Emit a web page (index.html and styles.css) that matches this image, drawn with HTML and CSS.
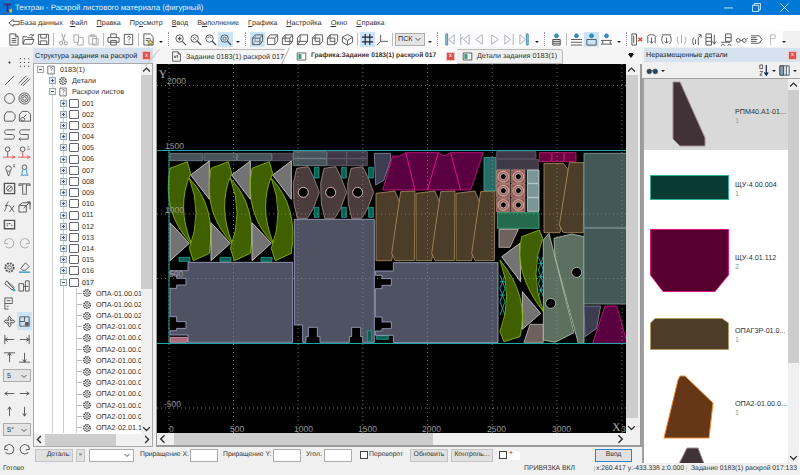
FILE: index.html
```html
<!DOCTYPE html>
<html lang="ru">
<head>
<meta charset="utf-8">
<title>Техтран</title>
<link rel="stylesheet" href="styles.css">
</head>
<body>
<svg class="defs" aria-hidden="true">
  <symbol id="doc" viewBox="0 0 14 14"><path d="M3 1h6l3 3v9H3zM9 1v3h3M5 6h5M5 8h5M5 10h5"/></symbol>
  <symbol id="open" viewBox="0 0 14 14"><path d="M1 12V4h4l1 1h5v2M1 12l2-5h10l-2 5zM8 3c1-2 3-2 4 0M12 1v2h-2"/></symbol>
  <symbol id="save" viewBox="0 0 14 14"><path d="M1.500 1.500h11v11h-11zM4 1.500v4h6v-4M3.500 12.500v-4h7v4"/></symbol>
  <symbol id="cut" viewBox="0 0 14 14"><path d="M5 1l3 8M9 1L6 9" stroke="#999"/><circle cx="4.500" cy="11" r="1.800" stroke="#999"/><circle cx="9.500" cy="11" r="1.800" stroke="#999"/></symbol>
  <symbol id="copy" viewBox="0 0 14 14"><path d="M2 2h5v8H2zM7 5h5v8H6v-3" stroke="#aaa"/></symbol>
  <symbol id="paste" viewBox="0 0 14 14"><path d="M2 3h8v9H2zM4 2h4v2H4zM6 6h6v7H6z" stroke="#aaa"/></symbol>
  <symbol id="print" viewBox="0 0 14 14"><path d="M4 5V1h6v4M1 5h12v5H1zM4 8h6v5H4z"/></symbol>
  <symbol id="hdoc" viewBox="0 0 14 14"><path d="M2.500 1.500h9v11h-9zM6 5c0-2 3-2 3 0 0 1-1.500 1-1.500 3M7.500 9.500v1"/></symbol>
  <symbol id="dstar" viewBox="0 0 14 14"><path d="M2 1h7l3 3v9H2zM4 6h5M4 8h3"/><path d="M9 7l1 2 2 .5-1.500 1.500.5 2-2-1-2 1 .5-2L6 9.500 8 9z" fill="#f4d35e" stroke="#775"/></symbol>
  <symbol id="zp" viewBox="0 0 14 14"><circle cx="6" cy="6" r="4"/><path d="M9 9l4 4M4 6h4M6 4v4" stroke-width="1.300"/></symbol>
  <symbol id="zs" viewBox="0 0 14 14"><circle cx="6" cy="6" r="4"/><path d="M9 9l4 4" stroke-width="1.500"/><path d="M4 4l4 4M8 4L4 8" stroke="#777"/></symbol>
  <symbol id="zr" viewBox="0 0 14 14"><circle cx="6" cy="6" r="4"/><path d="M9 9l4 4" stroke-width="1.500"/><path d="M4 6a2 2 0 0 1 4 0" stroke="#777"/></symbol>
  <symbol id="zf" viewBox="0 0 14 14"><circle cx="6" cy="6" r="4"/><path d="M9 9l4 4" stroke-width="1.500"/><path d="M4.500 4.500h3v3h-3z" stroke="#777"/></symbol>
  <symbol id="c1" viewBox="0 0 14 14"><path d="M1.500 5.500h8v7h-8zM1.500 5.500l3-3.500h8v7l-3 3.500M9.500 5.500l3-3.500"/><path d="M1.500 12.500l3-3.500h8M4.500 2v7" stroke="#888"/></symbol>
  <symbol id="c2" viewBox="0 0 14 14"><path d="M1.500 5.500h8v7h-8zM1.500 5.500l3-3.500h8v7l-3 3.500M9.500 5.500l3-3.500" fill="#fff"/></symbol>
  <symbol id="c3" viewBox="0 0 14 14"><path d="M4.500 2h8v7h-8zM1.500 5.500l3-3.500M1.500 5.500h8l3-3.500M1.500 5.500v7h8v-7M9.500 12.500l3-3.500"/></symbol>
  <symbol id="c4" viewBox="0 0 14 14"><path d="M1.500 5.500v7h8l3-3.500V2h-8zM4.500 2v7h8M1.500 12.500l3-3.500M4.500 9h-3"/></symbol>
  <symbol id="c5" viewBox="0 0 14 14"><path d="M1.500 5.500h8v7M1.500 5.500v7h8M1.500 5.500l3-3.500h8v7l-3 3.500M4.500 2v7h5"/></symbol>
  <symbol id="c6" viewBox="0 0 14 14"><path d="M7 1.500l5.500 3v5.500L7 13l-5.500-3V4.500zM1.500 4.500L7 8l5.500-3.500M7 8v5"/></symbol>
  <symbol id="grid" viewBox="0 0 14 14"><path d="M4.500 1v12M9.500 1v12M1 4.500h12M1 9.500h12" stroke="#223" stroke-width="1.200"/></symbol>
  <symbol id="axes" viewBox="0 0 14 14"><path d="M5 2v7h8M5 9l-4 4"/></symbol>
  <symbol id="n1" viewBox="0 0 14 14"><path d="M3 1h2v12H3z" fill="#9cd" stroke="#48a"/><path d="M12 2L6 7l6 5z" stroke="#aab"/></symbol>
  <symbol id="n2" viewBox="0 0 14 14"><path d="M3 1v12M6 7l6-5v10zM3 7l3-3" stroke="#aab"/></symbol>
  <symbol id="n3" viewBox="0 0 14 14"><path d="M10 2L3 7l7 5z" stroke="#aab"/></symbol>
  <symbol id="n4" viewBox="0 0 14 14"><path d="M4 2l7 5-7 5z" stroke="#aab"/></symbol>
  <symbol id="n5" viewBox="0 0 14 14"><path d="M11 1v12M2 2l6 5-6 5z" stroke="#aab"/></symbol>
  <symbol id="n6" viewBox="0 0 14 14"><path d="M9 1h2v12H9z" fill="#9cd" stroke="#48a"/><path d="M2 2l6 5-6 5z" stroke="#aab"/></symbol>
  <symbol id="p1" viewBox="0 0 14 14"><path d="M3 7h8v6H3zM3 9h8M3 11h8" stroke="#444"/><circle cx="7" cy="3" r="2" fill="#39c" stroke="#17a"/></symbol>
  <symbol id="p2" viewBox="0 0 14 14"><path d="M1 7h12M1 10h12M1 13h12"/><circle cx="7" cy="3" r="2" fill="#39c" stroke="#17a"/></symbol>
  <symbol id="p3" viewBox="0 0 14 14"><path d="M2 7h10v6H2z"/><circle cx="7" cy="3" r="2" fill="#39c" stroke="#17a"/></symbol>
  <symbol id="p4" viewBox="0 0 14 14"><path d="M1 8h12M1 12h12M3 8v4M11 8v4"/><circle cx="7" cy="3" r="2" fill="#39c" stroke="#17a"/></symbol>
  <symbol id="k1" viewBox="0 0 14 14"><path d="M2 1h5v12H2zM4 3v8"/><path d="M9 5l4 4M13 5l-4 4" stroke="#e33" stroke-width="1.500"/></symbol>
  <symbol id="k2" viewBox="0 0 14 14"><path d="M2 4c2-3 8-3 10 0M3 4v7M11 4v7M7 5v6M5 9l2 2 2-2"/></symbol>
  <symbol id="k3" viewBox="0 0 14 14"><path d="M2 2h10M3 3c-2 4-1 7 1 9M11 3c2 4 1 7-1 9M7 5v6M5 9l2 2 2-2"/></symbol>
  <symbol id="k4" viewBox="0 0 14 14"><path d="M3 4c-1 3-1 5 1 8M11 4c1 3 1 5-1 8M7 2v9" stroke="#aaa"/></symbol>
  <symbol id="k5" viewBox="0 0 14 14"><path d="M4 5c-2 3-1 6 0 8M9 5v8M9 5l3-3M12 2h-3M12 2v3M6 7v5"/></symbol>
  <symbol id="k6" viewBox="0 0 14 14"><path d="M1 1h6v12H1zM1 5h6M1 9h6M10 2v10M8 9l2 3 2-3"/></symbol>
  <symbol id="k7" viewBox="0 0 14 14"><path d="M6 1h6v8H6zM6 5h6M1 10h10M3 12a1.500 1.500 0 1 0 .1 0M10 12a1.500 1.500 0 1 0 .1 0"/></symbol>
  <symbol id="k8" viewBox="0 0 14 14"><circle cx="3.500" cy="8" r="2"/><circle cx="10" cy="8" r="2"/><path d="M5.500 8h2.500M12 7l2-2" /></symbol>
  <symbol id="k9" viewBox="0 0 14 14"><path d="M1 3h9l3 4-3 4H1M1 5h6M1 7h7M1 9h6"/></symbol>
  <symbol id="k10" viewBox="0 0 14 14"><path d="M6 13V2M6 2h5v4H6z" stroke="#bbb"/></symbol>
  <symbol id="r1" viewBox="0 0 14 14"><circle cx="7" cy="7" r=".8" fill="#222"/></symbol>
  <symbol id="r2" viewBox="0 0 14 14"><path d="M2 3h1M6.500 3h1M11 3h1M2 7h1M6.500 7h1M11 7h1M2 11h1M6.500 11h1M11 11h1" stroke="#222" stroke-width="1.200"/></symbol>
  <symbol id="r3" viewBox="0 0 14 14"><path d="M2 12L12 2"/></symbol>
  <symbol id="r4" viewBox="0 0 14 14"><path d="M1 10L9 2M3 12l8-8M5 13l8-8"/></symbol>
  <symbol id="r5" viewBox="0 0 14 14"><circle cx="7" cy="7" r="5.300"/></symbol>
  <symbol id="r6" viewBox="0 0 14 14"><circle cx="7" cy="7" r="6"/><circle cx="7" cy="7" r="4"/><circle cx="7" cy="7" r="2"/></symbol>
  <symbol id="r7" viewBox="0 0 14 14"><path d="M1.500 11V5.500L4 2h6l3 3v4l-2 3H2z"/></symbol>
  <symbol id="r8" viewBox="0 0 14 14"><path d="M1.500 12V5l3-3.500h6l3 3V12zM5 8a2 2 0 1 0 .1 0M6 8l3-3"/></symbol>
  <symbol id="r9" viewBox="0 0 14 14"><path d="M13 2H4C1 2 1 7 4 7h6c3 0 3 5 0 5H1"/></symbol>
  <symbol id="r10" viewBox="0 0 14 14"><path d="M13 2H4C1 2 1 7 4 7h7v5H1M1 12l2-1.500M1 12l2 1.500"/></symbol>
  <symbol id="r11" viewBox="0 0 14 14"><circle cx="5" cy="3.500" r="2.500"/><path d="M5 6v6M0 12h13M10 10.500l3 1.500-3 1.500" stroke="#e55"/><path d="M5 6v6" stroke="#39c"/></symbol>
  <symbol id="r12" viewBox="0 0 14 14"><circle cx="5" cy="3.500" r="2.500"/><path d="M5 6v6M0 12h13M10 10.500l3 1.500-3 1.500" stroke="#e55"/><path d="M10 1h2M10 3.500h3" stroke="#777"/></symbol>
  <symbol id="r13" viewBox="0 0 14 14"><circle cx="6" cy="5" r="3"/><path d="M4 8l2 5 2-5M11 1h2M11 3h2"/></symbol>
  <symbol id="r14" viewBox="0 0 14 14"><circle cx="7" cy="3.500" r="2.500"/><path d="M3 12h8M5 6l-1 6M9 6l1 6" stroke="#39c"/></symbol>
  <symbol id="r15" viewBox="0 0 14 14"><path d="M1.500 1.500h11v11h-11z" stroke-width="1.500"/><circle cx="7" cy="7" r="3"/><path d="M5 9l4-4"/></symbol>
  <symbol id="r16" viewBox="0 0 14 14"><path d="M1 4V2h12v2M1 4c2-1 3-1 4 0M13 4c-2-1-3-1-4 0M5 2v10M9 2v10M4 13h6"/></symbol>
  <symbol id="r17" viewBox="0 0 14 14"><path d="M1 12c3 0 2-10 5-10M2 6h4M7 6l5 7M12 6l-5 7"/></symbol>
  <symbol id="r18" viewBox="0 0 14 14"><path d="M1 6h8v7H1zM1 6l4-3h8v7M6 9l7-7M10 2h3v3"/></symbol>
  <symbol id="r19" viewBox="0 0 14 14"><path d="M1.500 2.500h11v9h-11z" stroke-width="1.500"/><path d="M4 8h1M9 8h1M6 6h2M4 6h1" stroke-width="1.500"/></symbol>
  <symbol id="ul" viewBox="0 0 14 14"><path d="M2 9a5 5 0 1 1 2 3M2 5v4h4" transform="rotate(15 7 7)"/></symbol>
  <symbol id="ur" viewBox="0 0 14 14"><path d="M12 9a5 5 0 1 0-2 3M12 5v4H8" transform="rotate(-15 7 7)"/></symbol>
  <symbol id="gear" viewBox="0 0 14 14"><circle cx="7" cy="7" r="4.500" stroke-dasharray="2 1" stroke-width="2"/><circle cx="7" cy="7" r="2"/></symbol>
  <symbol id="fill" viewBox="0 0 14 14"><path d="M3 8l5-6 4 4-4 4H5z"/><path d="M1 12h12" stroke="#39c" stroke-width="1.500"/></symbol>
  <symbol id="link" viewBox="0 0 14 14"><path d="M2 5l2-3 8 7-2 3zM5 4l6 6"/><circle cx="12" cy="12" r="1" fill="#39c" stroke="#39c"/></symbol>
  <symbol id="dim" viewBox="0 0 14 14"><path d="M1 5h5v8H1zM6 8h5M8 2h4v11H8z"/></symbol>
  <symbol id="single" viewBox="0 0 14 14"><path d="M2 1h8v6H2zM2 7v6h4M4 4h4M4 10h2"/></symbol>
  <symbol id="move" viewBox="0 0 14 14"><path d="M7 1l2 3H8v2h2V5l3 2-3 2V8H8v2h1l-2 3-2-3h1V8H4v1L1 7l3-2v1h2V4H5z"/></symbol>
  <symbol id="mid" viewBox="0 0 14 14"><path d="M2 2h10v10H2zM2 7h5V2"/><path d="M8 8h3v3H8z" fill="#555"/></symbol>
  <symbol id="a1" viewBox="0 0 14 14"><path d="M2 2v10M2 7h10M2 7l3-2M2 7l3 2"/></symbol>
  <symbol id="a2" viewBox="0 0 14 14"><path d="M12 2v10M2 7h10M12 7L9 5M12 7L9 9"/></symbol>
  <symbol id="a3" viewBox="0 0 14 14"><path d="M1 2h12M7 2v10M7 2L5 5M7 2l2 3"/></symbol>
  <symbol id="a4" viewBox="0 0 14 14"><path d="M1 12h12M7 2v10M7 12l-2-3M7 12l2-3"/></symbol>
  <symbol id="al" viewBox="0 0 14 14"><path d="M2 7h10M2 7l3-2M2 7l3 2"/></symbol>
  <symbol id="ar" viewBox="0 0 14 14"><path d="M2 7h10M12 7L9 5M12 7L9 9"/></symbol>
  <symbol id="au" viewBox="0 0 14 14"><path d="M7 2v10M7 2L5 5M7 2l2 3"/></symbol>
  <symbol id="ad" viewBox="0 0 14 14"><path d="M7 2v10M7 12l-2-3M7 12l2-3"/></symbol>
  <symbol id="back" viewBox="0 0 14 14"><path d="M1 7l5-4v2h7v4H6v2z"/></symbol>
  <symbol id="cu" viewBox="0 0 8 8"><path d="M1.500 5.500L4 3l2.500 2.500"/></symbol>
  <symbol id="cd" viewBox="0 0 8 8"><path d="M1.500 3L4 5.500 6.500 3"/></symbol>
  <symbol id="cl" viewBox="0 0 8 8"><path d="M5 1.500L2.500 4 5 6.500"/></symbol>
  <symbol id="cr" viewBox="0 0 8 8"><path d="M3 1.500L5.500 4 3 6.500"/></symbol>
  <symbol id="bino" viewBox="0 0 14 14"><circle cx="3.500" cy="8" r="2.500" fill="#246"/><circle cx="10" cy="8" r="2.500" fill="#246"/><path d="M5 7h4"/></symbol>
  <symbol id="sort" viewBox="0 0 14 14"><path d="M3 1h3v4H3zM3 8h3l-3 4h3" stroke="#555"/><path d="M10 1v11M8 9l2 3 2-3" stroke="#125" stroke-width="1.300"/></symbol>
  <symbol id="cols" viewBox="0 0 14 14"><path d="M2 2h10v10H2zM6 2v10M9 2v10" stroke="#456"/><path d="M2 2h4v10H2z" fill="#89a"/></symbol>
  <symbol id="tabd" viewBox="0 0 14 14"><path d="M2 1h7l3 3v9H2zM9 1v3h3"/><path d="M4 6l2 3M6 6L4 9M8 6v3M7 6h2"/></symbol>
  <symbol id="tabg" viewBox="0 0 14 14"><path d="M1.500 2.500h11v9h-11z"/><path d="M3 4h4v6H3z" fill="#3a9a7a" stroke="none"/></symbol>
</svg>

<header class="title">
  <svg class="appicon" viewBox="0 0 12 12"><path d="M2 1h8v2H7v7H5V3H2z" fill="#3a2a7a"/><path d="M1 9l3 3H1z" fill="#d33"/><path d="M8 7h3v4H8z" fill="#e8b030"/></svg>
  <span class="title-text">Техтран - Раскрой листового материала (фигурный)</span>
  <div class="win">
    <svg class="wb" viewBox="0 0 10 10"><path d="M0 5.500h10"/></svg>
    <svg class="wb" viewBox="0 0 10 10"><path d="M.5 2.500h7v7h-7zM2.500 2.500v-2h7v7h-2"/></svg>
    <svg class="wb" viewBox="0 0 10 10"><path d="M.5 .5l9 9M9.500 .5l-9 9"/></svg>
  </div>
</header>

<nav class="menu">
  <span class="mi first"><svg class="i"><use href="#back"/></svg>База данных</span>
  <span class="mi"><u>Ф</u>айл</span>
  <span class="mi"><u>П</u>равка</span>
  <span class="mi">Пр<u>о</u>смотр</span>
  <span class="mi"><u>В</u>вод</span>
  <span class="mi">В<u>ы</u>полнение</span>
  <span class="mi"><u>Г</u>рафика</span>
  <span class="mi"><u>Н</u>астройка</span>
  <span class="mi"><u>О</u>кно</span>
  <span class="mi"><u>С</u>правка</span>
</nav>

<div class="toolbar">
  <span class="b"><svg class="i"><use href="#doc"/></svg></span>
  <span class="b"><svg class="i"><use href="#open"/></svg></span>
  <span class="b"><svg class="i"><use href="#save"/></svg></span>
  <span class="sep"></span>
  <span class="b"><svg class="i"><use href="#cut"/></svg></span>
  <span class="b"><svg class="i"><use href="#copy"/></svg></span>
  <span class="b"><svg class="i"><use href="#paste"/></svg></span>
  <span class="sep"></span>
  <span class="b"><svg class="i"><use href="#print"/></svg></span>
  <span class="b"><svg class="i"><use href="#hdoc"/></svg></span>
  <span class="sep"></span>
  <span class="b"><svg class="i"><use href="#dstar"/></svg></span>
  <span class="dd"></span>
  <span class="gsep"></span>
  <span class="b"><svg class="i"><use href="#zp"/></svg></span>
  <span class="b"><svg class="i"><use href="#zs"/></svg></span>
  <span class="b"><svg class="i"><use href="#zr"/></svg></span>
  <span class="b on"><svg class="i"><use href="#zf"/></svg></span>
  <span class="dd"></span>
  <span class="gsep"></span>
  <span class="b on"><svg class="i"><use href="#c1"/></svg></span>
  <span class="b"><svg class="i"><use href="#c2"/></svg></span>
  <span class="b"><svg class="i"><use href="#c3"/></svg></span>
  <span class="b"><svg class="i"><use href="#c4"/></svg></span>
  <span class="b"><svg class="i"><use href="#c5"/></svg></span>
  <span class="b"><svg class="i"><use href="#c5"/></svg></span>
  <span class="b"><svg class="i"><use href="#c6"/></svg></span>
  <span class="sep"></span>
  <span class="b on"><svg class="i"><use href="#grid"/></svg></span>
  <span class="b"><svg class="i"><use href="#axes"/></svg></span>
  <span class="sep"></span>
  <span class="combo pck">ПСК<svg class="ch"><use href="#cd"/></svg></span>
  <span class="dd"></span>
  <span class="gsep"></span>
  <span class="b"><svg class="i"><use href="#n1"/></svg></span>
  <span class="b"><svg class="i"><use href="#n2"/></svg></span>
  <span class="b"><svg class="i"><use href="#n3"/></svg></span>
  <span class="b"><svg class="i"><use href="#n4"/></svg></span>
  <span class="b"><svg class="i"><use href="#n5"/></svg></span>
  <span class="b"><svg class="i"><use href="#n6"/></svg></span>
  <span class="dd"></span>
  <span class="gsep"></span>
  <span class="b"><svg class="i"><use href="#p1"/></svg></span>
  <span class="sep"></span>
  <span class="b"><svg class="i"><use href="#p2"/></svg></span>
  <span class="b on"><svg class="i"><use href="#p3"/></svg></span>
  <span class="b"><svg class="i"><use href="#p4"/></svg></span>
  <span class="dd"></span>
  <span class="gsep tight"></span>
  <span class="b"><svg class="i"><use href="#k1"/></svg></span>
  <span class="b"><svg class="i"><use href="#k2"/></svg></span>
  <span class="b"><svg class="i"><use href="#k3"/></svg></span>
  <span class="b"><svg class="i"><use href="#k4"/></svg></span>
  <span class="b"><svg class="i"><use href="#k5"/></svg></span>
  <span class="b"><svg class="i"><use href="#k6"/></svg></span>
  <span class="b"><svg class="i"><use href="#k7"/></svg></span>
  <span class="b"><svg class="i"><use href="#k8"/></svg></span>
  <span class="b"><svg class="i"><use href="#k9"/></svg></span>
  <span class="b"><svg class="i"><use href="#k10"/></svg></span>
  <span class="dd"></span>
</div>

<div class="work">
  <aside class="rail">
    <div class="rail-g">
      <span class="t"><svg class="i"><use href="#r1"/></svg></span><span class="t"><svg class="i"><use href="#r2"/></svg></span>
      <span class="t"><svg class="i"><use href="#r3"/></svg></span><span class="t"><svg class="i"><use href="#r4"/></svg></span>
      <span class="t"><svg class="i"><use href="#r5"/></svg></span><span class="t"><svg class="i"><use href="#r6"/></svg></span>
      <span class="t"><svg class="i"><use href="#r7"/></svg></span><span class="t"><svg class="i"><use href="#r8"/></svg></span>
      <span class="t"><svg class="i"><use href="#r9"/></svg></span><span class="t"><svg class="i"><use href="#r10"/></svg></span>
      <span class="t"><svg class="i"><use href="#r11"/></svg></span><span class="t"><svg class="i"><use href="#r12"/></svg></span>
      <span class="t"><svg class="i"><use href="#r13"/></svg></span><span class="t"><svg class="i"><use href="#r14"/></svg></span>
      <span class="t"><svg class="i"><use href="#r15"/></svg></span><span class="t"><svg class="i"><use href="#r16"/></svg></span>
      <span class="t"><svg class="i"><use href="#r17"/></svg></span><span class="t"><svg class="i"><use href="#r18"/></svg></span>
      <span class="t"><svg class="i"><use href="#r19"/></svg></span><span class="t"></span>
      <span class="t dim"><svg class="i"><use href="#ul"/></svg></span><span class="t dim"><svg class="i"><use href="#ur"/></svg></span>
    </div>
    <div class="rail-g lower">
      <span class="t"><svg class="i"><use href="#gear"/></svg></span><span class="t"><svg class="i"><use href="#fill"/></svg></span>
      <span class="t"><svg class="i"><use href="#link"/></svg></span><span class="t"><svg class="i"><use href="#dim"/></svg></span>
      <span class="t"><svg class="i"><use href="#single"/></svg></span><span class="t"></span>
      <span class="t"><svg class="i"><use href="#move"/></svg></span><span class="t on"><svg class="i"><use href="#mid"/></svg></span>
      <span class="t"><svg class="i"><use href="#a1"/></svg></span><span class="t"><svg class="i"><use href="#a2"/></svg></span>
      <span class="t"><svg class="i"><use href="#a3"/></svg></span><span class="t"><svg class="i"><use href="#a4"/></svg></span>
      <span class="wide"><span class="combo rc">5<svg class="ch"><use href="#cd"/></svg></span></span>
      <span class="t"><svg class="i"><use href="#al"/></svg></span><span class="t"><svg class="i"><use href="#ar"/></svg></span>
      <span class="t"><svg class="i"><use href="#au"/></svg></span><span class="t"><svg class="i"><use href="#ad"/></svg></span>
      <span class="wide"><span class="combo rc">5°<svg class="ch"><use href="#cd"/></svg></span></span>
      <span class="t"><svg class="i"><use href="#ul"/></svg></span><span class="t"><svg class="i"><use href="#ur"/></svg></span>
    </div>
  </aside>

  <div class="mid">
    <div class="panels">
      <section class="tree-panel">
        <div class="ph"><span>Структура задания на раскрой</span><span class="x">x</span></div>
        <div class="tree-body">
          <div class="tree-view">
            <div class="tree">
              <div class="r l0"><i class="ex m"></i><svg class="ti"><use href="#hdoc"/></svg><span>0183(1)</span></div>
              <div class="r l1"><i class="ex p"></i><svg class="ti"><use href="#gear"/></svg><span>Детали</span></div>
              <div class="r l1"><i class="ex m"></i><svg class="ti"><use href="#hdoc"/></svg><span>Раскрои листов</span></div>
              <div class="r l2"><i class="ex p"></i><b class="sq"></b><span>001</span></div>
              <div class="r l2"><i class="ex p"></i><b class="sq"></b><span>002</span></div>
              <div class="r l2"><i class="ex p"></i><b class="sq"></b><span>003</span></div>
              <div class="r l2"><i class="ex p"></i><b class="sq"></b><span>004</span></div>
              <div class="r l2"><i class="ex p"></i><b class="sq"></b><span>005</span></div>
              <div class="r l2"><i class="ex p"></i><b class="sq"></b><span>006</span></div>
              <div class="r l2"><i class="ex p"></i><b class="sq"></b><span>007</span></div>
              <div class="r l2"><i class="ex p"></i><b class="sq"></b><span>008</span></div>
              <div class="r l2"><i class="ex p"></i><b class="sq"></b><span>009</span></div>
              <div class="r l2"><i class="ex p"></i><b class="sq"></b><span>010</span></div>
              <div class="r l2"><i class="ex p"></i><b class="sq"></b><span>011</span></div>
              <div class="r l2"><i class="ex p"></i><b class="sq"></b><span>012</span></div>
              <div class="r l2"><i class="ex p"></i><b class="sq"></b><span>013</span></div>
              <div class="r l2"><i class="ex p"></i><b class="sq"></b><span>014</span></div>
              <div class="r l2"><i class="ex p"></i><b class="sq"></b><span>015</span></div>
              <div class="r l2"><i class="ex p"></i><b class="sq"></b><span>016</span></div>
              <div class="r l2"><i class="ex m"></i><b class="sq"></b><span class="hl">017</span></div>
              <div class="r l3"><svg class="ti"><use href="#gear"/></svg><span>ОПА-01.00.01</span></div>
              <div class="r l3"><svg class="ti"><use href="#gear"/></svg><span>ОПА-01.00.02</span></div>
              <div class="r l3"><svg class="ti"><use href="#gear"/></svg><span>ОПА-01.00.02</span></div>
              <div class="r l3"><svg class="ti"><use href="#gear"/></svg><span>ОПА2-01.00.0</span></div>
              <div class="r l3"><svg class="ti"><use href="#gear"/></svg><span>ОПА2-01.00.0</span></div>
              <div class="r l3"><svg class="ti"><use href="#gear"/></svg><span>ОПА2-01.00.0</span></div>
              <div class="r l3"><svg class="ti"><use href="#gear"/></svg><span>ОПА2-01.00.0</span></div>
              <div class="r l3"><svg class="ti"><use href="#gear"/></svg><span>ОПА2-01.00.0</span></div>
              <div class="r l3"><svg class="ti"><use href="#gear"/></svg><span>ОПА2-01.00.0</span></div>
              <div class="r l3"><svg class="ti"><use href="#gear"/></svg><span>ОПА2-01.00.0</span></div>
              <div class="r l3"><svg class="ti"><use href="#gear"/></svg><span>ОПА2-01.00.0</span></div>
              <div class="r l3"><svg class="ti"><use href="#gear"/></svg><span>ОПА2-01.00.0</span></div>
              <div class="r l3"><svg class="ti"><use href="#gear"/></svg><span>ОПА2-02.01.1</span></div>
            </div>
            <div class="vs vs-tree"><svg class="ar"><use href="#cu"/></svg><span class="th"></span><span class="tr"></span><svg class="ar"><use href="#cd"/></svg></div>
          </div>
          <div class="hs hs-tree"><svg class="ar"><use href="#cl"/></svg><span class="th"></span><span class="tr"></span><svg class="ar"><use href="#cr"/></svg></div>
        </div>
      </section>

      <section class="doc-area">
        <div class="tabs">
          <div class="tab t1"><svg class="ti"><use href="#tabd"/></svg><span>Задание 0183(1) раскрой 017</span></div>
          <div class="tab t2"><svg class="ti"><use href="#tabg"/></svg><strong>Графика:Задание 0183(1) раскрой 017</strong><span class="x">x</span></div>
          <div class="tab t3"><svg class="ti"><use href="#tabg"/></svg><span>Детали задания 0183(1)</span></div>
          <span class="tabmenu"></span>
        </div>
        <div class="doc-frame">
          <div class="doc-top">
            <svg class="canvas" viewBox="157 64 469 369">
              <defs>
                <polygon id="steel1" class="steel" points="84,367 398,367 398,607 84,607 84,585 30,585 30,572 50,572 50,565 78,565 78,545 50,545 50,530 30,530 30,445 50,445 50,435 78,435 78,415 50,415 50,405 30,405 30,392 84,392"/>
                <g id="gp">
                  <polygon class="gray" points="148,63 92,105 148,178"/>
                  <polygon class="gray" points="30,248 88,310 30,362"/>
                  <path class="green" d="M30 85L82 65L92 100Q48 200 95 312Q5 220 30 85Z"/>
                  <path class="green" d="M88 115Q170 200 148 340L100 362L88 325Q128 220 88 115Z"/>
                  <rect class="teal" x="57" y="352" width="33" height="12"/>
                </g>
                <g id="bone">
                  <path class="rose" fill-rule="evenodd" d="M410 85L445 80L460 110L478 157L460 205L442 235H412L402 190L400 130ZM430 142a15 15 0 1 0 .1 0Z"/>
                  <circle class="ring" cx="430" cy="157" r="15"/>
                  <rect class="teal" x="463" y="82" width="14" height="32"/>
                  <rect class="teal" x="463" y="202" width="14" height="30"/>
                </g>
                <g id="br">
                  <polygon class="brown" points="18,160 75,153 90,190 65,362 18,362"/>
                  <polygon class="brown" points="92,155 135,153 133,362 75,362 65,340"/>
                </g>
                <g id="washer">
                  <rect class="wash" x="-20" y="-20" width="40" height="40"/>
                  <circle class="wash-r" r="16"/>
                  <circle class="hole" r="9"/>
                </g>
              </defs>

              <g transform="translate(160 140) scale(.33333)">
                <rect class="gt" x="30" y="40" width="98" height="22"/>
                <rect class="gt" x="132" y="40" width="98" height="22"/>
                <rect class="gt" x="232" y="40" width="103" height="22"/>
                <rect class="pd" x="337" y="40" width="61" height="22"/>
                <rect class="gt" x="400" y="35" width="100" height="20"/>
                <rect class="gt" x="400" y="56" width="100" height="21"/>
                <rect class="pd" x="502" y="35" width="58" height="20"/>
                <rect class="pd" x="560" y="35" width="62" height="20"/>
                <rect class="pd" x="502" y="56" width="58" height="21"/>
                <rect class="pd" x="560" y="56" width="62" height="21"/>
                <use href="#gp"/>
                <use href="#gp" x="123"/>
                <use href="#gp" x="246"/>
                <use href="#steel1"/>
                <polygon class="steel" points="403,238 643,238 643,607 608,607 608,590 602,590 602,562 575,562 575,590 568,590 568,607 480,607 480,590 472,590 472,562 445,562 445,590 438,590 438,607 428,607 428,555 403,555"/>
                <rect class="pink" x="30" y="592" width="52" height="15"/>
                <use href="#bone"/>
                <use href="#bone" x="82"/>
                <use href="#bone" x="163"/>
                <rect class="teal" x="622" y="572" width="13" height="33"/>
                <rect class="teal" x="650" y="587" width="35" height="11"/>
                <polygon class="navy" points="643,40 692,40 692,60 672,120 647,135"/>
              </g>

              <g transform="translate(370 140) scale(.33333)">
                <polygon class="mag" points="38,150 68,48 88,48 108,38 135,150"/>
                <polygon class="mag" points="108,38 205,38 173,150 135,150"/>
                <polygon class="mag" points="205,38 222,48 242,38 272,150 173,150"/>
                <polygon class="mag" points="242,38 340,38 302,150 272,150"/>
                <use href="#br"/>
                <use href="#br" x="120"/>
                <use href="#br" x="240"/>
                <use href="#steel1" transform="translate(-14 1)"/>
                <rect class="tealb" x="342" y="52" width="36" height="100"/>
                <rect class="pd" x="380" y="35" width="118" height="20"/>
                <rect class="pd" x="380" y="58" width="125" height="30"/>
                <use href="#washer" x="400" y="110"/>
                <use href="#washer" x="445" y="110"/>
                <use href="#washer" x="400" y="152"/>
                <use href="#washer" x="445" y="152"/>
                <use href="#washer" x="400" y="195"/>
                <use href="#washer" x="445" y="195"/>
                <rect class="gs" x="472" y="90" width="35" height="40"/>
                <rect class="gs" x="472" y="131" width="35" height="41"/>
                <rect class="gs" x="472" y="173" width="35" height="41"/>
                <rect class="gb" x="382" y="218" width="125" height="47"/>
                <polygon class="rose2" points="387,268 445,268 420,322 387,322"/>
                <polygon class="gray" points="395,350 450,310 452,425"/>
                <polygon class="gray" points="457,455 512,520 457,568"/>
                <path class="hatch" d="M390 405l15 40-15 40 15 40M405 405l-15 40 15 40-15 40M505 350l15 40-15 40 15 40M520 350l-15 40 15 40-15 40M390 425h15M390 465h15M505 370h15M505 410h15M505 450h15"/>
                <path class="green" d="M455 290L508 270L518 295Q477 400 520 515Q430 400 455 290Z"/>
                <path class="green" d="M390 360Q480 470 450 590L402 605L390 575Q430 470 390 360Z"/>
                <polygon class="rose2" points="480,553 520,553 520,607 462,607"/>
                <path class="sage" fill-rule="evenodd" d="M520 300L537 280L612 578L555 607L520 600ZM542 475a15 15 0 1 0 .1 0Z"/>
                <path class="sage" fill-rule="evenodd" d="M552 295L605 282L642 290V610H625L555 350ZM620 382a15 15 0 1 0 .1 0Z"/>
                <rect class="magb" x="508" y="38" width="36" height="27"/>
                <rect class="magb" x="546" y="38" width="36" height="27"/>
                <rect class="magb" x="583" y="38" width="35" height="27"/>
                <polygon class="brown" points="522,70 580,70 595,90 570,278 522,278"/>
                <polygon class="brown" points="598,68 642,68 640,278 580,278 568,255"/>
                <rect class="slate" x="642" y="40" width="130" height="222"/>
                <rect class="slate" x="642" y="265" width="130" height="227"/>
                <polygon class="navy" points="642,498 692,498 680,565 645,590"/>
                <polygon class="mag" points="668,610 705,498 740,498 772,610"/>
              </g>

              <line class="sheet" x1="157" y1="150.500" x2="626" y2="150.500"/>
              <line class="sheet" x1="157" y1="343.500" x2="626" y2="343.500"/>
              <line class="sheet" x1="169" y1="150" x2="169" y2="343"/>

              <path class="gl" d="M169 64V433M233.500 64V433M298 64V433M362.800 64V433M427.500 64V433M492.300 64V433M557 64V433M622 64V433M157 85.500H626M157 214H626M157 278.500H626M157 408H626"/>

              <g class="lbl">
                <text x="167" y="84">2000</text>
                <text x="165" y="149">1500</text>
                <text x="165" y="213">1000</text>
                <text x="169" y="277">500</text>
                <text x="164" y="407">-500</text>
                <text x="169" y="432">0</text>
                <text x="230" y="432">500</text>
                <text x="294" y="432">1000</text>
                <text x="358" y="432">1500</text>
                <text x="422" y="432">2000</text>
                <text x="487" y="432">2500</text>
                <text x="552" y="432">3000</text>
                <text x="621" y="432">35</text>
              </g>
              <g class="axl">
                <text x="158.500" y="78">Y</text>
                <text x="612" y="431">X</text>
              </g>
            </svg>
            <div class="vs vs-doc"><svg class="ar"><use href="#cu"/></svg><span class="th"></span><span class="tr"></span><svg class="ar"><use href="#cd"/></svg></div>
          </div>
          <div class="hs hs-doc"><svg class="ar"><use href="#cl"/></svg><span class="th"></span><span class="tr"></span><svg class="ar"><use href="#cr"/></svg></div>
        </div>
      </section>
    </div>

    <div class="bottom">
      <span class="btn det">Деталь:</span>
      <span class="btn sm">»</span>
      <span class="inp cb"><svg class="ch"><use href="#cd"/></svg></span>
      <span class="lb g1">Приращение X:</span>
      <span class="inp inw"></span>
      <span class="lb g2">Приращение Y:</span>
      <span class="inp inw"></span>
      <span class="lb g3">Угол:</span>
      <span class="inp inw"></span>
      <span class="chk c1"></span>
      <span class="lb rev">Переворот</span>
      <span class="btn upd">Обновить</span>
      <span class="btn ctl">Контроль...</span>
      <span class="chk c2"></span>
      <span class="plus">+</span>
      <span class="btn go">Ввод</span>
    </div>
  </div>

  <aside class="parts">
    <div class="ph ph2"><span>Неразмещенные детали</span><span class="x">x</span></div>
    <div class="parts-tools">
      <svg class="i"><use href="#bino"/></svg><span class="dd"></span>
      <span class="spacer"></span>
      <svg class="i"><use href="#sort"/></svg><span class="dd"></span>
      <svg class="i"><use href="#cols"/></svg><span class="dd"></span>
    </div>
    <div class="parts-body">
      <div class="plist">
        <div class="pi sel"><svg class="thumb" viewBox="0 0 88 73"><polygon class="p-rose" points="29,3 36,3 61,59 61,67 36,67 29,60"/></svg><div class="pt"><div>РПМ40.А1-01...</div><div class="q">1</div></div></div>
        <div class="pi"><svg class="thumb" viewBox="0 0 88 73"><rect class="p-teal" x="6.500" y="23.500" width="78" height="24"/></svg><div class="pt"><div>ЩУ-4.00.004</div><div class="q">1</div></div></div>
        <div class="pi"><svg class="thumb" viewBox="0 0 88 73"><polygon class="p-mag" points="6.500,4.500 84.500,4.500 84.500,50 71,66.500 19,66.500 6.500,50"/></svg><div class="pt"><div>ЩУ-4.01.112</div><div class="q">2</div></div></div>
        <div class="pi"><svg class="thumb" viewBox="0 0 88 73"><polygon class="p-brown" points="6.500,25 11,20.500 78,20.500 84.500,25 84.500,51.500 6.500,51.500"/></svg><div class="pt"><div>ОПАГ3Р-01.0...</div><div class="q">1</div></div></div>
        <div class="pi"><svg class="thumb" viewBox="0 0 88 73"><polygon class="p-or" points="20,67 34,9 36,5 41,5 69,32 65,67"/></svg><div class="pt"><div>ОПА2-01.00.0...</div><div class="q">1</div></div></div>
        <div class="pi"><svg class="thumb" viewBox="0 0 88 73"><polygon class="p-rose" points="30,30 43,4 54,4 64,30"/></svg></div>
      </div>
      <div class="vs vs-parts"><svg class="ar"><use href="#cu"/></svg><span class="th"></span><span class="tr"></span><svg class="ar"><use href="#cd"/></svg></div>
    </div>
  </aside>
</div>

<footer class="status">
  <span class="s0">Готово</span>
  <span class="s1">ПРИВЯЗКА ВКЛ</span>
  <span class="s2">x:260.417 y:-433.338 z:0.000</span>
  <span class="s3">Задание 0183(1) раскрой 017:133</span>
</footer>
</body>
</html>
```

FILE: styles.css
```css
* { box-sizing: border-box; }
html, body { margin: 0; padding: 0; }
body {
  width: 800px; height: 475px; overflow: hidden;
  background: #f0f0f0; color: #333;
  font: 7.200px/1 "Liberation Sans", Arial, sans-serif;
  text-rendering: geometricPrecision;
  white-space: nowrap;
  display: flex; flex-direction: column;
}
.defs { display: none; }
u { text-underline-offset: 1px; }
.i { width: 13px; height: 13px; fill: none; stroke: #555; stroke-width: 1; flex: none; }

.title { height: 15px; background: #0078d7; color: #e8f2fb; display: flex; align-items: center; flex: none; padding-left: 2px; }
.appicon { width: 11px; height: 12px; flex: none; }
.title-text { margin-left: 2px; font-size: 7.800px; }
.win { margin-left: auto; display: flex; gap: 19px; padding-right: 11px; }
.wb { width: 9px; height: 9px; fill: none; stroke: #dfeefa; stroke-width: 1; }

.menu { height: 16px; background: #fff; flex: none; display: flex; align-items: center; gap: 9px; padding-left: 8px; }
.mi { display: flex; align-items: center; white-space: pre; }
.first { margin-right: -2px; }
.first .i { width: 12px; height: 12px; stroke: #444; }

.toolbar { height: 16px; flex: none; background: linear-gradient(#fcfcfc, #fcfcfc) 0 0 / 783px 100% no-repeat; display: flex; align-items: center; padding-left: 6px; }
.b { width: 15px; height: 15px; display: flex; align-items: center; justify-content: center; flex: none; }
.b.on, .t.on { background: #cce4f7; }
.sep { width: 1px; height: 13px; background: #bbb; margin: 0 2px; flex: none; }
.gsep { width: 1px; height: 14px; margin: 0 4px 0 3px; flex: none; border-left: 1px dotted #999; }
.gsep.tight { margin-right: 2px; }
.dd { width: 0; height: 0; border: 2px solid transparent; border-top-color: #222; border-bottom: 0; margin: 5px 2px 0 3px; flex: none; }
.combo { display: flex; align-items: center; justify-content: space-between; background: #e4e4e4; border: 1px solid #adadad; flex: none; }
.pck { width: 30px; height: 13px; padding: 0 2px; }
.ch { width: 8px; height: 8px; fill: none; stroke: #555; flex: none; }

.work { flex: 1; min-height: 0; display: flex; }
.rail { width: 33px; flex: none; padding: 6px 0 0 2px; }
.rail-g { display: grid; grid-template-columns: 15px 15px; grid-auto-rows: 18.100px; }
.rail-g.lower { margin-top: 6px; }
.t { display: flex; align-items: center; justify-content: center; }
.t.dim .i { stroke: #aaa; }
.wide { grid-column: 1 / -1; display: flex; align-items: center; }
.rc { width: 28px; height: 13px; margin-left: 1px; padding: 0 2px 0 3px; }

.mid { flex: none; width: 609px; display: flex; flex-direction: column; }
.panels { height: 400px; flex: none; display: flex; gap: 3px; }

.ph { height: 15px; background: #d6e2f0; display: flex; align-items: center; justify-content: space-between; padding: 0 2px; flex: none; margin-top: 1px; color: #222; }
.x { width: 9px; height: 9px; background: #d9534f; color: #fff; font-size: 6px; display: flex; align-items: center; justify-content: center; flex: none; border: 1px solid #f3c1bf; }

.tree-panel { width: 120px; flex: none; display: flex; flex-direction: column; }
.tree-body { flex: 1; min-height: 0; background: #fff; border: 1px solid #a8a8a8; display: flex; flex-direction: column; }
.tree-view { flex: 1; min-height: 0; display: flex; }
.tree { flex: 1; min-width: 0; overflow: hidden; }
.r { height: 11.200px; display: flex; align-items: center; }
.l0 { padding-left: 3px; }
.l1 { padding-left: 15px; background: linear-gradient(#ccc, #ccc) 18px 0 / 1px 100% no-repeat; }
.l2 { padding-left: 26px; background: linear-gradient(#ccc, #ccc) 18px 0 / 1px 100% no-repeat, linear-gradient(#ccc, #ccc) 29px 0 / 1px 100% no-repeat; }
.l3 { padding-left: 48px; background: linear-gradient(#ccc, #ccc) 18px 0 / 1px 100% no-repeat, linear-gradient(#ccc, #ccc) 29px 0 / 1px 100% no-repeat, linear-gradient(#ccc, #ccc) 42px 0 / 1px 100% no-repeat, linear-gradient(#bbb, #bbb) 42px 50% / 6px 1px no-repeat; }
.ex { width: 7px; height: 7px; border: 1px solid #9aa; background: #eef; flex: none; margin-right: 2px; }
.ex.m { background: linear-gradient(#557, #557) center / 3px 1px no-repeat, #f4f4f4; }
.ex.p { background: linear-gradient(#557, #557) center / 3px 1px no-repeat, linear-gradient(#557, #557) center / 1px 3px no-repeat, #dfe4f6; }
.ti { width: 10px; height: 10px; fill: none; stroke: #444; stroke-width: 1; flex: none; margin-right: 4px; }
.sq { width: 10px; height: 9px; border: 1px solid #666; background: #fff; flex: none; margin-right: 3px; border-radius: 1px; }
.hl { background: #f0f0f0; padding: 1px 0; }

.vs { width: 11px; flex: none; background: #f0f0f0; display: flex; flex-direction: column; align-items: stretch; }
.hs { height: 12px; flex: none; background: #f0f0f0; display: flex; align-items: stretch; }
.ar { width: 11px; height: 11px; fill: none; stroke: #333; flex: none; }
.th { background: #cdcdcd; flex: none; }
.tr { flex: 1; }
.vs-tree .th { height: 214px; }
.hs-tree .th { width: 71px; }

.doc-area { flex: 1; min-width: 0; display: flex; flex-direction: column; }
.tabs { height: 17px; flex: none; display: flex; align-items: center; padding-left: 15px; background: #f5f5f5; }
.tab { height: 15px; display: flex; align-items: center; position: relative; margin-top: 1px; flex: none; }
.tab .ti { width: 11px; height: 11px; }
.t1 { width: 114px; border-top: 1px solid #bbb; }
.t1::before { content: ""; position: absolute; left: -12px; top: -1px; width: 13px; height: 17px; border-left: 1px solid #bbb; transform: skewX(-40deg); transform-origin: top left; }
.t2 { width: 172px; background: #fff; padding-left: 11px; height: 16px; }
.t2::before { content: ""; position: absolute; left: 0; top: 0; width: 6px; height: 16px; border-left: 1px solid #aaa; transform: skewX(-25deg); }
.t2 strong { font-weight: 700; font-size: 6.700px; width: 129px; }
.t2 .x { margin-left: 6px; }
.t3 { width: 106px; border: 1px solid #bbb; border-left: 0; background: #f0f0f0; padding-left: 5px; border-radius: 0 3px 0 0; }
.tabmenu { margin-left: 65px; width: 0; height: 0; border: 3px solid transparent; border-top: 4px solid #111; border-bottom: 0; box-shadow: 0 -2px 0 -1px #111; }

.doc-frame { flex: 1; min-height: 0; border: 1px solid #9a9a9a; border-width: 0 2px 2px 1px; display: flex; flex-direction: column; background: #f0f0f0; }
.doc-top { flex: 1; min-height: 0; display: flex; }
.canvas { width: 469px; height: 369px; background: #000; flex: none; display: block; }
.vs-doc { width: 12px; }
.vs-doc .th { height: 343px; }
.hs-doc { width: 469px; }
.hs-doc .ar { width: 12px; height: 12px; }
.hs-doc .th { width: 259px; margin-left: 5px; }

.sheet { stroke: #1aa7a7; stroke-width: 1; }
.canvas polygon, .canvas rect, .canvas path, .canvas circle { vector-effect: non-scaling-stroke; stroke-width: .8; }
.green { fill: #3f5f00; stroke: #93c400; }
.gray { fill: #737373; stroke: #d8d8d8; }
.steel { fill: #4e5262; stroke: #a4accb; }
.gt { fill: #47555b; stroke: #7c8a90; }
.pd { fill: #3f3845; stroke: #6a6070; }
.teal { fill: #0f5f55; stroke: #23a190; }
.tealb { fill: #276a66; stroke: #45aaa0; }
.pink { fill: #a86a7a; stroke: #e0a8b8; }
.rose { fill: #4a3c3c; stroke: #a98f86; }
.ring { fill: none; stroke: #c8a8a0; }
.rose2 { fill: #6e625e; stroke: #c5bab0; }
.brown { fill: #4b3d27; stroke: #ae9163; }
.mag { fill: #5a0040; stroke: #e0138e; }
.magb { fill: #6a0040; stroke: #d81b78; }
.navy { fill: #3c3d50; stroke: #8a8ca8; }
.wash { fill: #8d5d58; stroke: #c09088; }
.wash-r { fill: #9a6a64; stroke: #e8c0b8; }
.hole { fill: #000; stroke: #f0c8c0; }
.gs { fill: #7b9695; stroke: #c8dcdc; }
.gb { fill: #246a4c; stroke: #4cb98c; }
.sage { fill: #5d6f5f; stroke: #b5ccb5; }
.slate { fill: #435857; stroke: #88a3a2; }
.hatch { fill: none; stroke: #1cc4c0; }
.gl { fill: none; stroke: #8a8a8a; stroke-width: 1; stroke-dasharray: 1 3; }
.lbl text { fill: #9a9a9a; font: 8.500px "Liberation Sans", sans-serif; }
.axl text { fill: #aaa; font: 12px "Liberation Serif", serif; }

.bottom { height: 16px; flex: none; display: flex; align-items: center; padding-left: 2px; font-size: 6.800px; }
.btn { height: 13px; background: #e1e1e1; border: 1px solid #c4c4c4; display: flex; align-items: center; justify-content: center; flex: none; }
.det { width: 38px; justify-content: flex-end; padding-right: 1px; }
.sm { width: 9px; margin-left: 3px; font-size: 6px; }
.inp { height: 13px; background: #fff; border: 1px solid #adadad; flex: none; display: flex; align-items: center; justify-content: flex-end; }
.cb { width: 45px; margin-left: 4px; padding-right: 2px; }
.inw { width: 28px; }
.lb { flex: none; }
.g1 { margin-left: 6px; width: 50px; }
.g2 { margin-left: 5px; width: 50px; }
.g3 { margin-left: 5px; width: 18px; }
.chk { width: 8px; height: 8px; border: 1px solid #444; background: #fff; flex: none; }
.c1 { margin-left: 8px; }
.rev { margin-left: 1px; width: 41px; }
.upd { width: 38px; }
.ctl { width: 42px; margin-left: 3px; }
.c2 { margin-left: 6px; }
.plus { width: 13px; height: 9px; background: #fff; padding-left: 2px; flex: none; }
.go { width: 37px; margin-left: 75px; border: 1px solid #2f84c9; }

.parts { flex: 1; min-width: 0; display: flex; flex-direction: column; }
.ph2 { height: 14px; padding-right: 3px; margin-left: 2px; }
.parts-tools { height: 16px; flex: none; display: flex; align-items: center; padding: 0 1px 0 4px; }
.parts-tools .dd { margin: 1px 2px 0 2px; }
.spacer { flex: 1; }
.parts-body { flex: 1; min-height: 0; display: flex; background: #fff; border: 1px solid #a0a0a0; border-width: 1px 0 0 2px; overflow: hidden; }
.plist { flex: 1; min-width: 0; }
.pi { height: 73px; display: flex; align-items: center; gap: 3px; }
.pi.sel { background: linear-gradient(#d9d9d9, #d9d9d9) 0 0 / 100% 71px no-repeat; }
.thumb { width: 88px; height: 73px; flex: none; }
.pt { line-height: 9px; color: #333; }
.q { color: #999; }
.p-rose { fill: #403236; stroke: #a08a8e; }
.p-teal { fill: #0a3b33; stroke: #2eb094; }
.p-mag { fill: #57002f; stroke: #d6147e; }
.p-brown { fill: #4b3d27; stroke: #b49a6a; }
.p-or { fill: #653716; stroke: #f08a30; }
.vs-parts { width: 11px; margin-right: 1px; }
.vs-parts .th { height: 273px; }

.status { height: 12px; flex: none; display: flex; align-items: center; font-size: 6.800px; }
.s0 { margin-left: 3px; }
.s1 { margin-left: auto; width: 70px; }
.s2 { width: 92px; padding-left: 1px; border-left: 1px solid #d0d0d0; }
.s3 { width: 114px; padding-left: 4px; border-left: 1px solid #d0d0d0; }
```
